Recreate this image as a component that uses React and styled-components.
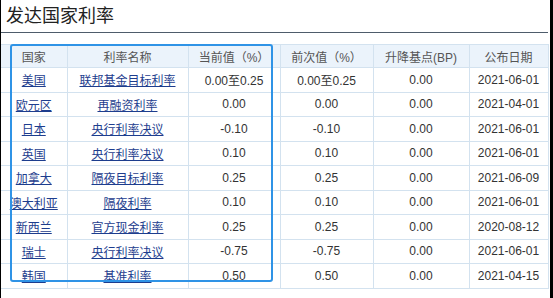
import styled, { createGlobalStyle } from "styled-components";

const GlobalStyle = createGlobalStyle`
    html, body {
        margin: 0;
        padding: 0;
        background: #000;
    }
    body {
        font-family: "Liberation Sans", Arial, "Noto Sans CJK SC", sans-serif;
    }
`;

const Panel = styled.div`
    margin-left: 1px;
    width: 549px;
    height: 298px;
    background: #fff;
    overflow: hidden;
`;

const Title = styled.h2`
    margin: 0;
    width: 542px;
    height: 32px;
    padding-left: 5px;
    font-size: 18px;
    font-weight: normal;
    line-height: 32px;
    color: #222;
    border-bottom: 1px solid #4e5c6b;
`;

const TableWrap = styled.div`
    position: relative;
    margin-top: 11px;
    width: 547px;
`;

const Table = styled.table`
    width: 547px;
    table-layout: fixed;
    border-collapse: collapse;
    font-size: 12px;
    color: #333;
`;

const HeadCell = styled.th`
    height: 22px;
    padding: 0;
    font-weight: normal;
    color: #555;
    background: #ebf3fb;
    border: 1px solid #d3e2ef;
    border-left: ${(p) => (p.$first ? "none" : "1px solid #d3e2ef")};
    text-align: center;
`;

const Cell = styled.td`
    height: 23.5px;
    padding: 0;
    text-align: center;
    border: 1px solid #d3e2ef;
    border-left: ${(p) => (p.$first ? "none" : "1px solid #d3e2ef")};
    white-space: nowrap;
`;

const RateLink = styled.a`
    color: #1d3d8e;
    text-decoration: underline;
    cursor: pointer;
`;

const Highlight = styled.div`
    position: absolute;
    left: 9px;
    top: 0;
    width: 259px;
    height: 234px;
    border: 2px solid #2f93e6;
    border-radius: 3px;
    pointer-events: none;
`;

const columns = [
    { label: "国家", width: 66 },
    { label: "利率名称", width: 121 },
    { label: "当前值（%）", width: 92 },
    { label: "前次值（%）", width: 93 },
    { label: "升降基点(BP)", width: 96 },
    { label: "公布日期", width: 79 },
];

const rows = [
    ["美国", "联邦基金目标利率", "0.00至0.25", "0.00至0.25", "0.00", "2021-06-01"],
    ["欧元区", "再融资利率", "0.00", "0.00", "0.00", "2021-04-01"],
    ["日本", "央行利率决议", "-0.10", "-0.10", "0.00", "2021-06-01"],
    ["英国", "央行利率决议", "0.10", "0.10", "0.00", "2021-06-01"],
    ["加拿大", "隔夜目标利率", "0.25", "0.25", "0.00", "2021-06-09"],
    ["澳大利亚", "隔夜利率", "0.10", "0.10", "0.00", "2021-06-01"],
    ["新西兰", "官方现金利率", "0.25", "0.25", "0.00", "2020-08-12"],
    ["瑞士", "央行利率决议", "-0.75", "-0.75", "0.00", "2021-06-01"],
    ["韩国", "基准利率", "0.50", "0.50", "0.00", "2021-04-15"],
];

const App = () => {
    return <>
        <GlobalStyle />
        <Panel>
            <Title>发达国家利率</Title>
            <TableWrap>
                <Table>
                    <colgroup>
                        {columns.map((c) => <col key={c.label} style={{ width: c.width }} />)}
                    </colgroup>
                    <thead>
                        <tr>
                            {columns.map((c, i) => (
                                <HeadCell key={c.label} $first={i === 0}>{c.label}</HeadCell>
                            ))}
                        </tr>
                    </thead>
                    <tbody>
                        {rows.map((r) => (
                            <tr key={r[0]}>
                                <Cell $first><RateLink>{r[0]}</RateLink></Cell>
                                <Cell><RateLink>{r[1]}</RateLink></Cell>
                                <Cell>{r[2]}</Cell>
                                <Cell>{r[3]}</Cell>
                                <Cell>{r[4]}</Cell>
                                <Cell>{r[5]}</Cell>
                            </tr>
                        ))}
                    </tbody>
                </Table>
                <Highlight />
            </TableWrap>
        </Panel>
    </>
}

export default App
